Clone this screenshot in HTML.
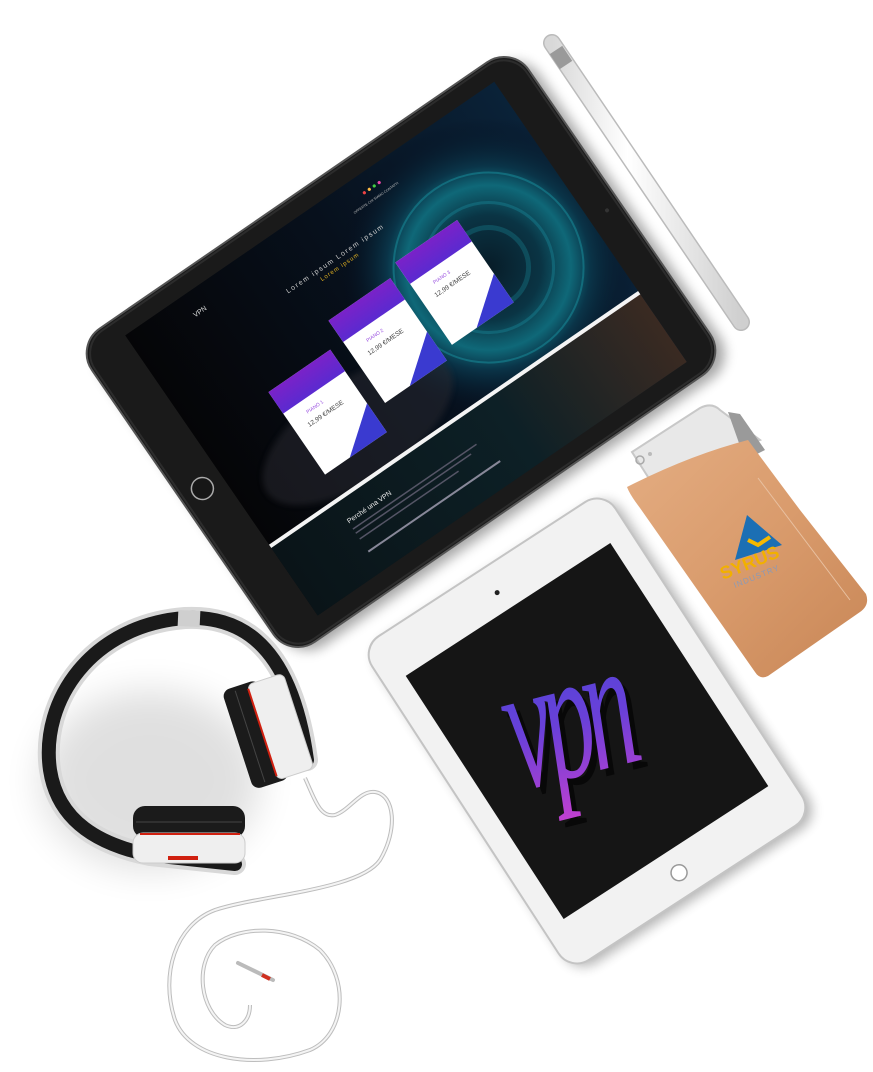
<!DOCTYPE html>
<html><head><meta charset="utf-8"><style>
html,body{margin:0;padding:0;background:#fff;}
svg{display:block;}
</style></head><body>
<svg width="873" height="1072" viewBox="0 0 873 1072" xmlns="http://www.w3.org/2000/svg">
<defs>
<filter id="sh" x="-20%" y="-20%" width="140%" height="140%"><feGaussianBlur stdDeviation="6"/></filter>
<filter id="bl" x="-50%" y="-50%" width="200%" height="200%"><feGaussianBlur stdDeviation="18"/></filter>
<filter id="b3"><feGaussianBlur stdDeviation="3"/></filter>
<radialGradient id="glow" cx="0.5" cy="0.5" r="0.5">
<stop offset="0" stop-color="#081c28"/><stop offset="0.35" stop-color="#0a3444"/><stop offset="0.55" stop-color="#0f6878"/><stop offset="0.68" stop-color="#0a3448"/><stop offset="1" stop-color="#050a1a" stop-opacity="0"/>
</radialGradient>
<linearGradient id="hero" x1="0" y1="0" x2="1" y2="0">
<stop offset="0" stop-color="#050507"/><stop offset="0.5" stop-color="#07101c"/><stop offset="1" stop-color="#0a2238"/>
</linearGradient>
<linearGradient id="low" x1="0" y1="0" x2="1" y2="0">
<stop offset="0" stop-color="#0a1418"/><stop offset="0.6" stop-color="#0d2026"/><stop offset="1" stop-color="#3a2a22"/>
</linearGradient>
<linearGradient id="vpng" x1="0" y1="0" x2="0" y2="1">
<stop offset="0" stop-color="#4348d8"/><stop offset="0.55" stop-color="#6a40d8"/><stop offset="1" stop-color="#c040d0"/>
</linearGradient>
<linearGradient id="leather" x1="0" y1="0" x2="1" y2="1">
<stop offset="0" stop-color="#e4ad82"/><stop offset="0.5" stop-color="#d99b6c"/><stop offset="1" stop-color="#c88656"/>
</linearGradient>
<linearGradient id="pen" x1="0" y1="0" x2="1" y2="0">
<stop offset="0" stop-color="#d8d8d8"/><stop offset="0.4" stop-color="#ffffff"/><stop offset="1" stop-color="#cfcfcf"/>
</linearGradient>
<linearGradient id="card" x1="0" y1="0" x2="0" y2="1">
<stop offset="0" stop-color="#7a22c8"/><stop offset="1" stop-color="#5a2ad0"/>
</linearGradient>
<clipPath id="scr"><rect x="-218" y="-170" width="448" height="340"/></clipPath>
</defs>

<ellipse cx="150" cy="780" rx="110" ry="90" fill="#000" opacity="0.12" filter="url(#bl)"/>

<!-- black tablet -->
<g transform="translate(401,352) rotate(-34.5)">
  <rect x="-262" y="-186" width="530" height="378" rx="30" fill="#000" opacity="0.35" filter="url(#sh)" transform="translate(3,6)"/>
  <rect x="-265" y="-190" width="530" height="380" rx="30" fill="#1a1a1a" stroke="#555" stroke-width="2"/>
  <rect x="-262" y="-187" width="524" height="374" rx="28" fill="none" stroke="#2c2c2c" stroke-width="2"/>
  <circle cx="-241" cy="0" r="11" fill="#161616" stroke="#aaa" stroke-width="1.5"/>
  <circle cx="250" cy="0" r="2" fill="#333"/>
  <g clip-path="url(#scr)">
    <rect x="-218" y="-170" width="448" height="340" fill="url(#hero)"/>
    <circle cx="120" cy="-20" r="150" fill="url(#glow)"/>
    <circle cx="120" cy="-20" r="95" fill="none" stroke="#1a9aa6" stroke-width="2" opacity="0.45"/>
    <circle cx="120" cy="-20" r="65" fill="none" stroke="#188a9a" stroke-width="3" opacity="0.4"/>
    <circle cx="120" cy="-20" r="40" fill="none" stroke="#167a8a" stroke-width="5" opacity="0.4"/>
    <ellipse cx="-80" cy="40" rx="110" ry="50" fill="#2a2a30" opacity="0.5" filter="url(#b3)"/>
    <text x="-150" y="-145" font-family="Liberation Sans, sans-serif" font-size="7" fill="#ddd">VPN</text>
    <text x="40" y="-140" font-family="Liberation Sans, sans-serif" font-size="3.5" fill="#bbb">OFFERTE   CHI SIAMO   CONTATTI</text>
    <circle cx="60" cy="-152" r="1.6" fill="#e44"/><circle cx="66" cy="-152" r="1.6" fill="#fb4"/><circle cx="72" cy="-152" r="1.6" fill="#4c4"/><circle cx="78" cy="-152" r="1.6" fill="#e4a"/>
    <text x="-60" y="-112" font-family="Liberation Sans, sans-serif" font-size="7" fill="#ccc" letter-spacing="1.5">Lorem ipsum Lorem ipsum</text>
    <text x="-25" y="-103" font-family="Liberation Sans, sans-serif" font-size="6" fill="#e0b020" letter-spacing="1">Lorem ipsum</text>
    <g transform="translate(-22,-22)">
    <g transform="translate(-110,-20)">
      <rect x="0" y="0" width="75" height="100" fill="#fff"/>
      <rect x="0" y="0" width="75" height="26" fill="url(#card)"/>
      <polygon points="75,65 75,100 30,100" fill="#3a3ad0"/>
      <text x="20" y="40" font-family="Liberation Sans, sans-serif" font-size="5" fill="#9a50e0">PIANO 1</text>
      <text x="14" y="52" font-family="Liberation Sans, sans-serif" font-size="6.5" fill="#444">12,99 €/MESE</text>
    </g>
    <g transform="translate(-20,-45)">
      <rect x="0" y="0" width="75" height="100" fill="#fff"/>
      <rect x="0" y="0" width="75" height="26" fill="url(#card)"/>
      <polygon points="75,65 75,100 30,100" fill="#3a3ad0"/>
      <text x="20" y="40" font-family="Liberation Sans, sans-serif" font-size="5" fill="#9a50e0">PIANO 2</text>
      <text x="14" y="52" font-family="Liberation Sans, sans-serif" font-size="6.5" fill="#444">12,99 €/MESE</text>
    </g>
    <g transform="translate(68,-55)">
      <rect x="0" y="0" width="75" height="100" fill="#fff"/>
      <rect x="0" y="0" width="75" height="26" fill="url(#card)"/>
      <polygon points="75,65 75,100 30,100" fill="#3a3ad0"/>
      <text x="20" y="40" font-family="Liberation Sans, sans-serif" font-size="5" fill="#9a50e0">PIANO 3</text>
      <text x="14" y="52" font-family="Liberation Sans, sans-serif" font-size="6.5" fill="#444">12,99 €/MESE</text>
    </g>
    </g>
    <rect x="-218" y="86" width="448" height="90" fill="url(#low)"/>
    <rect x="-218" y="84" width="448" height="4" fill="#f4f4f4"/>
    <text x="-140" y="112" font-family="Liberation Sans, sans-serif" font-size="7" fill="#eee">Perché una VPN</text>
    <rect x="-140" y="118" width="150" height="1.5" fill="#556"/>
    <rect x="-140" y="123" width="140" height="1.5" fill="#556"/>
    <rect x="-140" y="130" width="120" height="1.5" fill="#556"/>
    <rect x="-140" y="145" width="160" height="2" fill="#889"/>
  </g>
</g>

<!-- pencil -->
<line x1="552" y1="43" x2="741" y2="322" stroke="#bbb" stroke-width="18" stroke-linecap="round"/>
<line x1="552" y1="43" x2="741" y2="322" stroke="url(#pen)" stroke-width="15" stroke-linecap="round"/>
<line x1="556" y1="50" x2="566" y2="65" stroke="#9a9a9a" stroke-width="15"/>

<!-- phone + pouch -->
<g>
  <path d="M632,452 L700,408 Q712,402 720,410 L760,440 L650,480 Z" fill="#e8e8e8" stroke="#c8c8c8" stroke-width="2"/>
  <circle cx="640" cy="460" r="4" fill="none" stroke="#aaa" stroke-width="1.5"/>
  <circle cx="650" cy="454" r="2" fill="#bbb"/>
  <path d="M728,412 L740,414 L765,450 L745,460 Z" fill="#9a9a9a"/>
  <path d="M627,487 Q690,455 748,440 Q770,470 800,510 L866,594 Q870,605 860,612 L768,676 Q760,680 755,672 L640,508 Q630,495 627,487 Z" fill="url(#leather)"/>
  <path d="M758,478 L850,600" stroke="#e8c0a0" stroke-width="1" fill="none"/>
  <polygon points="747,515 735,560 782,545" fill="#1c6fb4"/>
  <path d="M748,540 L758,545 L770,537" stroke="#f5b800" stroke-width="4" fill="none"/>
  <text x="723" y="580" font-family="Liberation Sans, sans-serif" font-weight="bold" font-size="18" fill="#f2b000" transform="rotate(-22 723 580)">SYRUS</text>
  <text x="735" y="588" font-family="Liberation Sans, sans-serif" font-size="8" fill="#8a9ab8" letter-spacing="1" transform="rotate(-22 735 588)">INDUSTRY</text>
</g>

<!-- white iPad -->
<g transform="translate(587,731) rotate(-33)">
  <rect x="-141" y="-187" width="290" height="386" rx="22" fill="#000" opacity="0.3" filter="url(#sh)"/>
  <rect x="-145" y="-193" width="290" height="386" rx="22" fill="#f2f2f2" stroke="#c4c4c4" stroke-width="2"/>
  <rect x="-122" y="-145" width="244" height="290" fill="#151515"/>
  <circle cx="0" cy="-165" r="2.5" fill="#222"/>
  <circle cx="0" cy="169" r="8" fill="#fff" stroke="#999" stroke-width="1.5"/>
</g>
<g transform="translate(520,790) rotate(-14) scale(0.85,1.55)">
  <text x="5" y="5" font-family="Liberation Serif, serif" font-style="italic" font-size="120" fill="#000" opacity="0.6" letter-spacing="-10">vpn</text>
  <text x="0" y="0" font-family="Liberation Serif, serif" font-style="italic" font-size="120" fill="url(#vpng)" letter-spacing="-10">vpn</text>
</g>

<!-- headphones -->
<path d="M307,760 C292,650 245,615 185,618 C92,625 40,700 50,770 C58,822 100,845 150,855 L235,864" fill="none" stroke="#d8d8d8" stroke-width="22" stroke-linecap="round"/>
<path d="M307,760 C292,650 245,615 185,618 C92,625 40,700 50,770 C58,822 100,845 150,855 L235,864" fill="none" stroke="#1a1a1a" stroke-width="14" stroke-linecap="round"/>
<path d="M178,618 L200,619" stroke="#cfcfcf" stroke-width="16"/>
<g transform="translate(270,730) rotate(-18)">
  <rect x="-34" y="-52" width="38" height="104" rx="8" fill="#1b1b1b"/>
  <rect x="-8" y="-50" width="38" height="100" rx="6" fill="#efefef" stroke="#ccc"/>
  <rect x="-9" y="-46" width="2" height="92" fill="#d02010"/>
  <line x1="-21" y1="-48" x2="-21" y2="48" stroke="#444" stroke-width="1"/>
</g>
<rect x="133" y="806" width="112" height="32" rx="12" fill="#1b1b1b"/>
<line x1="136" y1="822" x2="242" y2="822" stroke="#444"/>
<rect x="133" y="833" width="112" height="30" rx="10" fill="#efefef" stroke="#ccc"/>
<rect x="140" y="833" width="100" height="2" fill="#d02010"/>
<rect x="168" y="856" width="30" height="4" fill="#d02010"/>

<!-- cable -->
<path d="M305,778 C315,800 320,818 335,815 C350,810 360,790 375,792 C395,795 398,830 380,860 C360,890 260,895 215,910 C175,925 160,975 175,1020 C190,1060 255,1070 310,1050 C345,1035 350,980 320,950 C290,925 240,925 215,945 C195,965 200,1010 225,1025 C240,1032 250,1020 250,1005" fill="none" stroke="#bdbdbd" stroke-width="4"/>
<path d="M305,778 C315,800 320,818 335,815 C350,810 360,790 375,792 C395,795 398,830 380,860 C360,890 260,895 215,910 C175,925 160,975 175,1020 C190,1060 255,1070 310,1050 C345,1035 350,980 320,950 C290,925 240,925 215,945 C195,965 200,1010 225,1025 C240,1032 250,1020 250,1005" fill="none" stroke="#f4f4f4" stroke-width="2"/>
<line x1="238" y1="963" x2="273" y2="980" stroke="#bbb" stroke-width="4" stroke-linecap="round"/>
<line x1="262" y1="975" x2="270" y2="979" stroke="#d03020" stroke-width="4"/>
</svg>
</body></html>
